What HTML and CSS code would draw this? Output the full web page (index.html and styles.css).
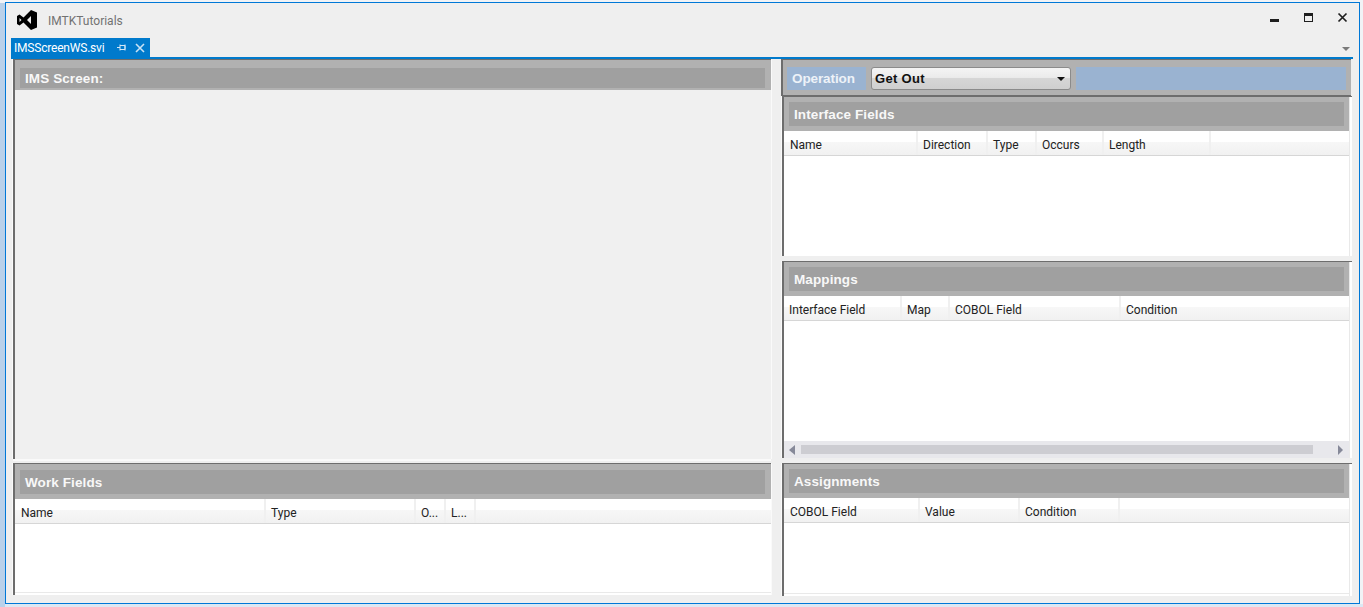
FILE: index.html
```html
<!DOCTYPE html>
<html lang="en">
<head>
<meta charset="utf-8">
<title>IMTKTutorials</title>
<link rel="stylesheet" href="styles.css">
</head>
<body>
<div class="window">
  <header class="titlebar">
    <svg class="logo" viewBox="0 0 20 20"><path fill-rule="evenodd" d="M14 0 20 2.500V17.500L14 20 6.500 12.500 2.500 15.500 0 14V6L2.500 4.500 6.500 7.500ZM14 6 10 10 14 14ZM2.500 8V12L4.500 10Z"/></svg>
    <span class="app-name">IMTKTutorials</span>
    <div class="controls">
      <svg class="ctl" viewBox="0 0 12 12"><rect x="1" y="7" width="9" height="3" fill="#1e1e1e"/></svg>
      <svg class="ctl" viewBox="0 0 12 12"><path d="M1 1H10V10H1ZM2 4V9H9V4Z" fill="#1e1e1e" fill-rule="evenodd"/></svg>
      <svg class="ctl" viewBox="0 0 12 12"><path d="M1.500 1.500 9.500 9.500M9.500 1.500 1.500 9.500" stroke="#1e1e1e" stroke-width="1.700" fill="none"/></svg>
    </div>
  </header>
  <div class="tabstrip">
    <div class="tab">
      <span class="tab-name">IMSScreenWS.svi</span>
      <svg class="pin" viewBox="0 0 9 7"><path d="M0 3.500H3M3 .5V6.500M3 1.500H8V5.500H3M8 .5V6.500" stroke="#d5e8f6" fill="none"/></svg>
      <svg class="tab-close" viewBox="0 0 10 10"><path d="M1 1 9 9M9 1 1 9" stroke="#c9e2f4" stroke-width="1.600" fill="none"/></svg>
    </div>
    <svg class="overflow" viewBox="0 0 8 4"><path d="M0 0H8L4 4Z" fill="#7a7a7a"/></svg>
  </div>
  <div class="tabline"></div>
  <main class="workspace">
    <section class="col col-left">
      <div class="pane pane-screen">
        <div class="band band-screen"><h2 class="band-title">IMS Screen:</h2></div>
      </div>
      <div class="pane pane-work">
        <div class="band band-work"><h2 class="band-title">Work Fields</h2></div>
        <div class="thead">
          <div class="th w251">Name</div>
          <div class="th w150">Type</div>
          <div class="th w30">O...</div>
          <div class="th w30">L...</div>
          <div class="th fill"></div>
        </div>
        <div class="tbody"></div>
      </div>
    </section>
    <section class="col col-right">
      <div class="op-bar">
        <div class="op-label">Operation</div>
        <div class="op-select"><span>Get Out</span><i class="caret"></i></div>
        <div class="op-rest"></div>
      </div>
      <div class="pane pane-iface">
        <div class="band band-right"><h2 class="band-title">Interface Fields</h2></div>
        <div class="thead">
          <div class="th w134">Name</div>
          <div class="th w70">Direction</div>
          <div class="th w49">Type</div>
          <div class="th w67">Occurs</div>
          <div class="th w107">Length</div>
          <div class="th fill"></div>
        </div>
        <div class="tbody"></div>
      </div>
      <div class="pane pane-map">
        <div class="band band-right"><h2 class="band-title">Mappings</h2></div>
        <div class="thead">
          <div class="th w118 tight">Interface Field</div>
          <div class="th w48">Map</div>
          <div class="th w171">COBOL Field</div>
          <div class="th fill">Condition</div>
        </div>
        <div class="tbody"></div>
        <div class="hscroll">
          <i class="arrow left"></i>
          <div class="thumb"></div>
          <i class="arrow right"></i>
        </div>
      </div>
      <div class="pane pane-assign">
        <div class="band band-right"><h2 class="band-title">Assignments</h2></div>
        <div class="thead">
          <div class="th w136">COBOL Field</div>
          <div class="th w100">Value</div>
          <div class="th w100">Condition</div>
          <div class="th fill"></div>
        </div>
        <div class="tbody"></div>
      </div>
    </section>
  </main>
</div>
</body>
</html>
```
FILE: styles.css
```css
* { box-sizing: border-box; }
html, body { margin: 0; }
body {
  background:
    linear-gradient(#b9d1ea, #b9d1ea) 0 3px / 5px 100% no-repeat,
    linear-gradient(#f1f3f6 604px, #dde8f3 604px);
  overflow: hidden;
  font-family: Roboto, "Noto Sans", sans-serif;
  color: #1a1a1a;
  height: 607px;
  padding: 2px 3px 3px 5px;
}
.window {
  height: 602px;
  border: 1px solid #0078d7;
  background: #efefef;
  display: flex;
  flex-direction: column;
}
.titlebar { height: 35px; flex: none; display: flex; align-items: center; padding-left: 11px; }
.logo { width: 20px; height: 20px; margin-top: -1px; }
.app-name { margin-left: 11px; font-size: 12px; color: #727272; }
.controls { margin-left: auto; display: flex; gap: 22px; margin-right: 10px; margin-top: -5px; }
.ctl { width: 12px; height: 12px; display: block; }
.tabstrip { height: 19px; flex: none; display: flex; align-items: flex-end; padding: 0 9px 0 5px; justify-content: space-between; }
.tab { width: 139px; height: 19px; background: #007acc; color: #fff; display: flex; align-items: center; padding-left: 3px; font-size: 12px; }
.tab-name { width: 103px; letter-spacing: -.2px; }
.pin { width: 9px; height: 7px; }
.tab-close { width: 10px; height: 10px; margin-left: 9px; }
.overflow { width: 8px; height: 4px; margin-bottom: 6px; }
.tabline { height: 2px; flex: none; background: #007acc; margin: 0 6px 0 5px; }
.workspace { flex: 1; display: flex; padding: 0 7px 0 7px; gap: 10px; min-height: 0; }
.col { display: flex; flex-direction: column; min-width: 0; }
.col-left { width: 758px; flex: none; }
.col-right { flex: 1; }
.pane {
  border-left: 2px solid #6d6d6d;
  border-top: 1px solid #6d6d6d;
  box-shadow: -1px 0 0 #fafafa, 1px 0 0 #fafafa;
  display: flex;
  flex-direction: column;
  background: #fff;
  flex: none;
}
.pane-screen { height: 400px; margin-bottom: 4px; background: #f0f0f0; box-shadow: -1px 0 0 #fafafa, 1px 0 0 #fafafa, 0 2px 0 #fafafa; }
.pane-work { height: 132px; padding-bottom: 3px; box-shadow: -1px 0 0 #fafafa, 1px 0 0 #fafafa, inset 0 -2px 0 #fff, inset 0 -3px 0 #e9e9e9; }
.band { background: #b1b1b1; flex: none; display: flex; }
.band-screen { height: 30px; padding: 8px 6px 2px 5px; }
.band-work { height: 35px; padding: 6px 6px 5px 5px; }
.band-right { height: 34px; padding: 5px 5px 5px 5px; }
.band-title {
  margin: 0; flex: 1; background: #a0a0a0; color: #f8f8f8;
  font: bold 13.5px/16px "Liberation Sans", Arial, sans-serif;
  letter-spacing: .1px; padding: 2px 0 0 5px;
  display: flex; align-items: center;
}
.thead { height: 25px; flex: none; display: flex; background: linear-gradient(#fff 0, #fff 11px, #f7f7f7 11px, #f1f1f1 24px); border-bottom: 1px solid #d6d6d6; }
.th { font-size: 12px; line-height: 28px; padding-left: 5px; border-right: 2px solid #f0f0f0; white-space: nowrap; overflow: hidden; flex: none; color: #222; }
.th:first-child { padding-left: 6px; }
.th.fill { flex: 1; border-right: 0; }
.th.tight { padding-left: 5px; }
.w251 { width: 251px; } .w150 { width: 150px; } .w30 { width: 30px; }
.w134 { width: 134px; } .w70 { width: 70px; } .w49 { width: 49px; } .w67 { width: 67px; } .w107 { width: 107px; }
.w118 { width: 118px; } .w48 { width: 48px; } .w171 { width: 171px; }
.w136 { width: 136px; } .w100 { width: 100px; }
.tbody { flex: 1; background: #fff; }
.op-bar { height: 37px; flex: none; margin-right: 1px; background: #b1b1b1; border-top: 1px solid #6d6d6d; border-left: 2px solid #6d6d6d; border-bottom: 1px solid #6d6d6d; display: flex; padding: 7px 5px 5px 4px; }
.op-label { width: 79px; background: #9ab3d1; color: #edf2f8; font: bold 13.5px/23px "Liberation Sans", Arial, sans-serif; letter-spacing: -.1px; padding-left: 5px; }
.op-select { width: 200px; margin-left: 5px; border: 1px solid #8b8b8b; border-radius: 3px; background: linear-gradient(#f4f4f4, #ebebeb 45%, #d6d6d6 50%, #cfcfcf); font: bold 13px/21px "Liberation Sans", Arial, sans-serif; letter-spacing: .3px; color: #111; padding: 0 3px; display: flex; align-items: center; justify-content: space-between; }
.caret { border: 4px solid transparent; border-top-color: #111; border-bottom: 0; margin-right: 2px; }
.op-rest { flex: 1; margin-left: 5px; background: #9ab3d1; }
.col-right .pane { margin-left: 1px; padding-right: 3px; box-shadow: -1px 0 0 #fafafa, inset -2px 0 0 #fff, inset -3px 0 0 #e9e9e9; }
.pane-iface { height: 160px; margin-bottom: 5px; }
.pane-map { height: 197px; margin-bottom: 5px; }
.col-right .pane-assign { flex: none; height: 133px; padding-bottom: 3px; box-shadow: -1px 0 0 #fafafa, inset -2px 0 0 #fff, inset -3px 0 0 #e9e9e9, inset 0 -2px 0 #fff, inset 0 -3px 0 #e9e9e9; }
.hscroll { height: 17px; flex: none; background: #e8e8ec; display: flex; align-items: center; padding: 0 6px 0 5px; }
.thumb { flex: 1; height: 9px; background: #cdcdd2; margin: 0 25px 0 6px; }
.arrow { border: 5px solid transparent; border-left-width: 0; border-right: 6px solid #868999; }
.arrow.right { border-right: 0; border-left: 5px solid #868999; }
```
